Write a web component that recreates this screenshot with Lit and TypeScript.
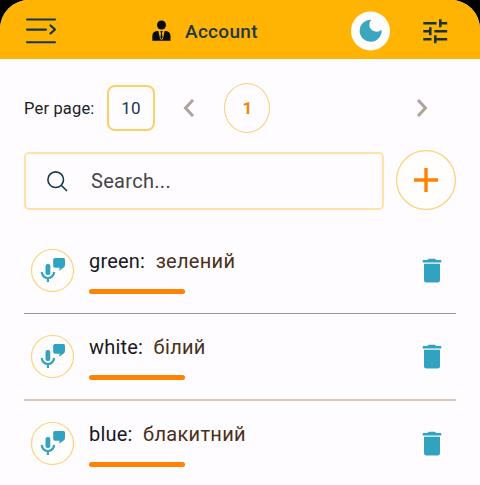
import { LitElement, html, css, svg } from "lit";
import { customElement, property } from "lit/decorators.js";

@customElement("word-row")
class WordRow extends LitElement {
  @property() word = "";
  @property() translation = "";

  static styles = css`
    :host { display: flex; height: 86px; border-bottom: var(--line-width, 1px) solid var(--line, #98949a); }
    .speak { width: 43px; height: 43px; margin: 22px 15px 0 7px; flex: none; }
    .text { flex: 1; padding-top: 21px; }
    .pair { display: flex; height: 26px; line-height: 26px; font-size: 20px; letter-spacing: .2px; white-space: pre; }
    .word { color: #17171f; }
    .translation { color: #48301a; margin-left: 10.5px; letter-spacing: .3px; }
    .bar { width: 96px; height: 5px; border-radius: 3px; background: #ff8200; margin-top: 14.5px; }
    .trash { width: 20px; height: 26px; margin: 31px 14px 0 0; flex: none; }
    svg { display: block; }
  `;

  render() {
    return html`
      <svg class="speak" viewBox="0 0 43 43">
        <circle cx="21.5" cy="21.5" r="21" fill="#fffefc" stroke="#fbd47c" stroke-width="1.2" />
        <rect x="14.5" y="15" width="4.8" height="11" rx="2.1" fill="#31a3c1" />
        <path d="M10.700 23C11.300 27 13.400 29 16.900 29C20.400 29 22.500 27 23.200 23M16.900 29V33" fill="none" stroke="#31a3c1" stroke-width="2.2" />
        <path d="M24 9H32.5Q34 9 34 10.500V16Q34 18 32 19L28 21.800L28.700 18.800H24Q22.200 18.800 22.200 17V10.500Q22.200 9 24 9Z" fill="#31a3c1" />
      </svg>
      <div class="text">
        <div class="pair"><span class="word">${this.word}:</span><span class="translation">${this.translation}</span></div>
        <div class="bar"></div>
      </div>
      <svg class="trash" viewBox="0 0 20 26">
        <path d="M.8 2H5.500L6.700 .8H13L14.200 2H19.200V4.500H.8ZM2 5.800H18V22.500Q18 24.600 15.800 24.600H4.200Q2 24.600 2 22.500Z" fill="#31a3c1" />
      </svg>
    `;
  }
}

@customElement("app-root")
class AppRoot extends LitElement {
  static styles = css`
    :host { display: block; width: 480px; height: 485px; overflow: hidden; background: #000; font-family: Roboto, "Noto Sans", sans-serif; }
    .screen { height: 485px; background: #fefcfe; border-radius: 29px 29px 0 0; overflow: hidden; }
    svg { display: block; flex: none; }
    header { height: 59px; display: flex; align-items: center; background: #ffb404; padding: 3px 32px 0 25px; box-sizing: border-box; }
    .title { display: flex; align-items: center; gap: 13px; margin-left: 94px; flex: 1; font-size: 19px; font-weight: 500; color: #1f3843; letter-spacing: .3px; }
    .theme { margin-right: 32px; }
    main { padding: 0 24px; }
    .pager { display: flex; align-items: center; height: 46px; margin-top: 26px; }
    .label { font-size: 16.5px; letter-spacing: .17px; color: #202026; width: 83px; white-space: nowrap; }
    .size { width: 48px; height: 46px; box-sizing: border-box; border: 2px solid #fcd064; border-radius: 8px; display: grid; place-items: center; font-size: 17px; color: #17384c; letter-spacing: .2px; }
    .prev { margin-left: 28px; }
    .page { width: 46px; height: 50px; box-sizing: border-box; border: 1px solid #fbce70; border-radius: 50%; display: grid; place-items: center; margin-left: 29px; color: #f0850c; font-weight: 700; font-size: 17px; }
    .page span { margin-left: 1px; }
    .next { margin-left: auto; margin-right: 28px; }
    .tools { display: flex; align-items: center; gap: 12px; height: 60px; margin-top: 19px; }
    .search { flex: 1; height: 58px; box-sizing: border-box; border: 2px solid #fde3a8; border-radius: 5px; display: flex; align-items: center; padding-left: 21px; gap: 23px; font-size: 20px; letter-spacing: .3px; color: #45454a; margin-top: 2px; }
    .words { margin-top: 17px; }
    word-row + word-row { margin-top: -1px; }
    .warm { --line: #d6c6b4; --line-width: 2px; }
    .words .warm { margin-top: -1px; }
  `;

  render() {
    const ink = "#18323c";
    const chevron = (d: string) => svg`<path d=${d} fill="none" stroke="#ada39b" stroke-width="3" />`;
    return html`
      <div class="screen">
        <header>
          <svg width="33" height="28" viewBox="0 0 33 28" fill="none" stroke="#183448" stroke-width="2.1" stroke-linecap="round" stroke-linejoin="round">
            <path d="M2 2.500H30M2 12.600H21M2 25.200H30" />
            <path d="M25.500 8.500L30 12.500L25.500 16.500" stroke-width="2.300" />
          </svg>
          <div class="title">
            <svg width="20" height="22" viewBox="0 0 20 22">
              <circle cx="9.500" cy="5" r="4.500" fill="#090b0b" />
              <path d="M.3 20.800V16Q.5 11.500 5 11H14Q18.300 11.500 18.500 16V20.800Z" fill="#090b0b" />
              <path d="M6.400 11H12.600L11 18.500L9.500 20.300L8 18.500Z" fill="#ffb404" />
              <path d="M8.300 11H10.700L10 13.200L10.600 17.800L9.500 19.500L8.400 17.800L9 13.200Z" fill="#090b0b" />
            </svg>
            <span>Account</span>
          </div>
          <svg class="theme" width="40" height="40" viewBox="0 0 40 40">
            <circle cx="19.500" cy="20" r="19.500" fill="#fffefc" />
            <path d="M20.200 8.800A11 11 0 1 0 30.600 18.800C27 22.500 18.800 20.500 18.400 14.200C18.400 12 19 10.300 20.200 8.800Z" fill="#3aa6bf" />
          </svg>
          <svg width="25" height="26" viewBox="0 0 25 26" fill="none" stroke=${ink} stroke-width="2.500">
            <path d="M.3 5.300H13.500M17.300 1.200V9.200M17.300 5.300H24.200M.3 13.300H7.500M7.300 9.300V17.300M11.300 13.300H24.200M.3 21.300H8.500M12.300 17.300V25.200M12.300 21.300H24.200" />
          </svg>
        </header>
        <main>
          <div class="pager">
            <span class="label">Per page:</span>
            <div class="size">10</div>
            <svg class="prev" width="12" height="18" viewBox="0 0 12 18">${chevron("M10 1L2.500 9L10 17")}</svg>
            <div class="page"><span>1</span></div>
            <svg class="next" width="12" height="18" viewBox="0 0 12 18">${chevron("M2 1L9.500 9L2 17")}</svg>
          </div>
          <div class="tools">
            <div class="search">
              <svg width="21" height="21" viewBox="0 0 21 21" fill="none" stroke="#17384c" stroke-width="1.600">
                <circle cx="8.700" cy="8.700" r="7.800" /><path d="M14.200 14.200L20 20" />
              </svg>
              <span>Search...</span>
            </div>
            <svg width="60" height="60" viewBox="0 0 60 60">
              <circle cx="30" cy="30" r="29.400" fill="#fffefc" stroke="#fbd07a" stroke-width="1.200" />
              <path d="M18 30H42M30 18V42" stroke="#ff8200" stroke-width="3.400" />
            </svg>
          </div>
          <div class="words">
            <word-row word="green" translation="зелений"></word-row>
            <word-row class="warm" word="white" translation="білий"></word-row>
            <word-row word="blue" translation="блакитний"></word-row>
          </div>
        </main>
      </div>
    `;
  }
}
